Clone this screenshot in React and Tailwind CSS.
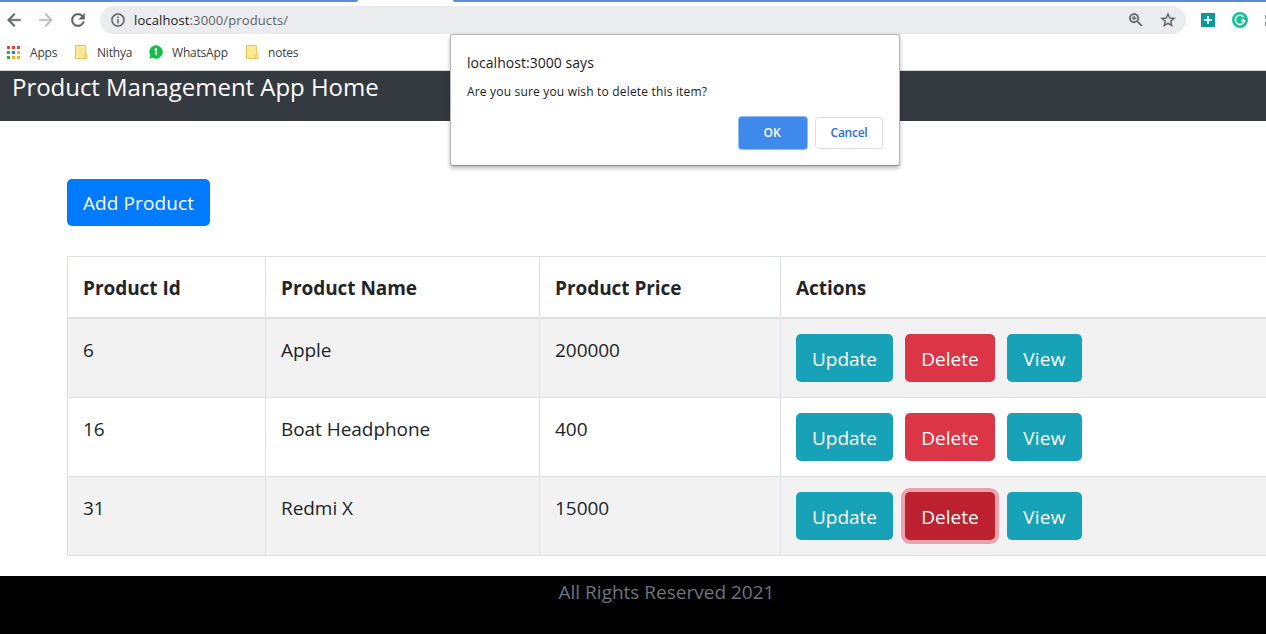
import React from 'react';

const products = [
  { id: '6', name: 'Apple', price: '200000' },
  { id: '16', name: 'Boat Headphone', price: '400' },
  { id: '31', name: 'Redmi X', price: '15000', deleting: true },
];

function BackIcon({ className }) {
  return (
    <svg viewBox="0 0 24 24" className={className} fill="currentColor" stroke="currentColor" strokeWidth=".5">
      <path d="M20 11H7.83l5.59-5.59L12 4l-8 8 8 8 1.41-1.41L7.83 13H20v-2z" />
    </svg>
  );
}

function ReloadIcon({ className }) {
  return (
    <svg viewBox="0 0 24 24" className={className} fill="currentColor" stroke="currentColor" strokeWidth=".5">
      <path d="M17.65 6.35C16.2 4.9 14.21 4 12 4c-4.42 0-7.99 3.58-7.99 8s3.57 8 7.99 8c3.73 0 6.84-2.55 7.73-6h-2.08c-.82 2.33-3.04 4-5.65 4-3.31 0-6-2.69-6-6s2.69-6 6-6c1.66 0 3.14.69 4.22 1.78L13 11h7V4l-2.35 2.35z" />
    </svg>
  );
}

function InfoIcon({ className }) {
  return (
    <svg viewBox="0 0 24 24" className={className} fill="currentColor" stroke="currentColor" strokeWidth=".4">
      <path d="M11 17h2v-6h-2v6zm1-15C6.48 2 2 6.48 2 12s4.480 10 10 10 10-4.480 10-10S17.520 2 12 2zm0 18c-4.410 0-8-3.590-8-8s3.590-8 8-8 8 3.590 8 8-3.590 8-8 8zM11 9h2V7h-2v2z" />
    </svg>
  );
}

function ZoomInIcon({ className }) {
  return (
    <svg viewBox="0 0 24 24" className={className} fill="currentColor" stroke="currentColor" strokeWidth=".3">
      <path d="M15.500 14h-.79l-.28-.27C15.410 12.590 16 11.110 16 9.500 16 5.910 13.090 3 9.500 3S3 5.910 3 9.500 5.910 16 9.500 16c1.610 0 3.090-.59 4.230-1.570l.27.28v.79l5 4.990L20.490 19l-4.990-5zm-6 0C7.010 14 5 11.990 5 9.500S7.010 5 9.500 5 14 7.010 14 9.500 11.990 14 9.500 14z" />
      <path d="M12.300 10.200h-2.100v2.100H8.800v-2.100H6.700V8.800h2.100V6.700h1.400v2.100h2.100z" />
    </svg>
  );
}

function StarIcon({ className }) {
  return (
    <svg viewBox="0 0 24 24" className={className} fill="currentColor" stroke="currentColor" strokeWidth=".4">
      <path d="M22 9.240l-7.190-.62L12 2 9.190 8.630 2 9.240l5.460 4.730L5.820 21 12 17.270 18.180 21l-1.630-7.030L22 9.240zM12 15.400l-3.760 2.270 1-4.280-3.320-2.880 4.380-.38L12 6.100l1.710 4.040 4.380.38-3.320 2.880 1 4.280L12 15.400z" />
    </svg>
  );
}

function AppsIcon() {
  return (
    <svg viewBox="0 0 13 13" className="h-[13px] w-[13px]" shapeRendering="crispEdges">
      <path fill="#ea4335" d="M0 0h3v3H0zM5 0h3v3H5zM10 0h3v3h-3z" />
      <path fill="#34a853" d="M0 5h3v3H0zM0 10h3v3H0z" />
      <path fill="#1a85f0" d="M5 5h3v3H5z" />
      <path fill="#fbaf17" d="M10 5h3v3h-3zM5 10h3v3H5zM10 10h3v3h-3z" />
    </svg>
  );
}

function FolderIcon() {
  return (
    <svg viewBox="0 0 13 14" className="h-[14px] w-[13px]">
      <path d="M.5.5h10.200v9h1.100v4H.5z" fill="#ffe793" stroke="#e8c54f" />
      <path d="M9.700 13.300v-3.600h2.100v3.600z" fill="#fff3c0" stroke="#e8c54f" strokeWidth=".9" />
    </svg>
  );
}

function WhatsAppBadge() {
  return (
    <svg viewBox="0 0 14 14" className="h-[14px] w-[14px]">
      <path d="M7 .3a6.700 6.700 0 1 1-3.300 12.500L.4 13.700l.9-3.300A6.700 6.700 0 0 1 7 .3z" fill="#0dc143" />
      <path d="M5.200 4.900 7.200 3.900v6.300" fill="none" stroke="#fff" strokeWidth="1.500" />
    </svg>
  );
}

function Toolbar() {
  return (
    <div className="flex h-9 shrink-0 items-center text-[#5f6368]">
      <BackIcon className="ml-[4px] h-5 w-5" />
      <BackIcon className="ml-3 h-5 w-5 rotate-180 text-[#bbbdbf]" />
      <ReloadIcon className="ml-3 h-5 w-5" />
      <div className="ml-[12px] flex h-7 w-[1086px] shrink-0 items-center rounded-full bg-[#ebecee] pl-[10px]">
        <InfoIcon className="h-4 w-4" />
        <span className="ml-2 text-[13px] leading-5 tracking-[0.12px] text-[#5f6368]">
          <span className="text-[#202124]">localhost</span>:3000/products/
        </span>
        <ZoomInIcon className="ml-auto h-[18px] w-[18px]" />
        <StarIcon className="mr-[9px] ml-[14px] h-[18px] w-[18px]" />
      </div>
      <svg viewBox="0 0 14 14" className="ml-[15px] h-[14px] w-[14px] shrink-0">
        <path d="M0 0h14v14H0z" fill="#0a9a97" />
        <path d="M7 3v8M3 7h8" stroke="#fff" strokeWidth="1.700" />
      </svg>
      <svg viewBox="0 0 16 16" className="ml-[17px] h-4 w-4 shrink-0">
        <circle cx="8" cy="8" r="8" fill="#15c39a" />
        <path d="M11.600 5A4.600 4.600 0 1 0 12.500 8.700H9.300" fill="none" stroke="#fff" strokeWidth="1.400" />
        <path d="m10.300 6.900 2.200 1.800v2.200" fill="none" stroke="#fff" strokeWidth="1.200" />
      </svg>
      <div className="ml-[17px] flex w-px shrink-0 flex-col gap-[3px]">
        <div className="h-[4px] bg-[#8a8d91]" />
        <div className="h-[4px] bg-[#8a8d91]" />
      </div>
    </div>
  );
}

function Bookmarks() {
  return (
    <div className="flex h-8 shrink-0 items-center border-b border-[#d5dbdc] pb-[5px] pl-[7px] text-[12px] leading-[17px] text-[#3c4043]">
      <AppsIcon />
      <span className="ml-[10px] w-[45px] tracking-[-0.2px]">Apps</span>
      <FolderIcon />
      <span className="ml-[9px] w-[52px] tracking-[-0.2px]">Nithya</span>
      <WhatsAppBadge />
      <span className="ml-[9px] w-[74px] tracking-[-0.2px]">WhatsApp</span>
      <FolderIcon />
      <span className="ml-[9px] tracking-[-0.2px]">notes</span>
    </div>
  );
}

function Button({ className, children }) {
  return (
    <button className={'flex h-12 items-center justify-center rounded-[5px] pt-[2px] text-white ' + className}>
      {children}
    </button>
  );
}

function ProductRow({ product, className }) {
  return (
    <div className={'grid h-[79px] grid-cols-[198px_274px_241px_1fr] border-b border-[#dee2e6] ' + className}>
      <div className="border-l border-[#dee2e6] pt-[17px] pl-[15px]">{product.id}</div>
      <div className="border-l border-[#dee2e6] pt-[17px] pl-[15px] tracking-[-0.05px]">{product.name}</div>
      <div className="border-l border-[#dee2e6] pt-[17px] pl-[15px] tracking-[-0.05px]">{product.price}</div>
      <div className="flex gap-3 border-l border-[#dee2e6] pt-[15px] pl-[15px]">
        <Button className="w-[97px] bg-[#17a2b8]">Update</Button>
        <Button
          className={
            product.deleting ? 'w-[90px] bg-[#bd2130] ring-4 ring-[#eba2aa]' : 'w-[90px] bg-[#dc3545]'
          }
        >
          Delete
        </Button>
        <Button className="w-[75px] bg-[#17a2b8] tracking-[0.3px]">View</Button>
      </div>
    </div>
  );
}

function ConfirmDialog() {
  return (
    <div className="absolute top-[34px] left-[450px] flex h-[132px] w-[450px] flex-col rounded-[3px] border border-[#b4b6b8] border-b-[#8f9194] bg-white pt-[18px] pr-4 pl-4 shadow-[0_2px_4px_rgba(0,0,0,0.3)]">
      <div className="text-[14px] leading-5 tracking-[0.04px] text-[#202124]">localhost:3000 says</div>
      <div className="mt-[11px] text-[12px] leading-4 tracking-[0.18px] text-[#202124]">
        Are you sure you wish to delete this item?
      </div>
      <div className="mt-[17px] flex justify-end gap-2 text-[12px] font-semibold">
        <button className="h-8 w-[68px] rounded-[3px] bg-[#3f89ec] pr-[2px] text-white ring-1 ring-[#8fbcf6]">
          OK
        </button>
        <button className="h-8 w-[68px] rounded-[4px] border border-[#dadce0] tracking-[-0.25px] text-[#2a6de0]">
          Cancel
        </button>
      </div>
    </div>
  );
}

export default function App() {
  return (
    <div className="relative flex h-[634px] w-[1266px] flex-col overflow-hidden bg-white font-['Open_Sans','Noto_Sans',sans-serif]">
      <div className="flex h-[2px] shrink-0 justify-between">
        <div className="w-[358px] rounded-br-[4px] bg-[#5f8ad6]" />
        <div className="w-[813px] rounded-bl-[4px] bg-[#5f8ad6]" />
      </div>
      <Toolbar />
      <div className="h-px shrink-0" />
      <Bookmarks />
      <header className="h-[50px] shrink-0 bg-[#343a40] pl-3 text-[24px] leading-8 tracking-[-0.04px] text-white">
        Product Management App Home
      </header>
      <main className="flex h-[455px] shrink-0 flex-col pt-[58px] pl-[67px] text-[19px] leading-[29px] text-[#212529]">
        <button className="h-[47px] w-[143px] shrink-0 rounded-[5px] bg-[#007bff] pt-[2px] tracking-[0.1px] text-white">
          Add Product
        </button>
        <div className="mt-[30px]">
          <div className="grid h-[63px] grid-cols-[198px_274px_241px_1fr] border-t border-b-2 border-[#dee2e6] leading-[62px] font-bold tracking-[-0.05px]">
            <div className="h-[60px] border-l border-[#dee2e6] pl-[15px]">Product Id</div>
            <div className="h-[60px] border-l border-[#dee2e6] pl-[15px]">Product Name</div>
            <div className="h-[60px] border-l border-[#dee2e6] pl-[15px]">Product Price</div>
            <div className="h-[60px] border-l border-[#dee2e6] pl-[15px]">Actions</div>
          </div>
          {products.map((product, i) => (
            <ProductRow key={product.id} product={product} className={i % 2 === 0 ? 'bg-[#f2f2f2]' : 'bg-white'} />
          ))}
        </div>
      </main>
      <footer className="flex-1 bg-black pl-[67px] text-center text-[19px] leading-8 text-[#6c757d]">
        All Rights Reserved 2021
      </footer>
      <ConfirmDialog />
    </div>
  );
}
